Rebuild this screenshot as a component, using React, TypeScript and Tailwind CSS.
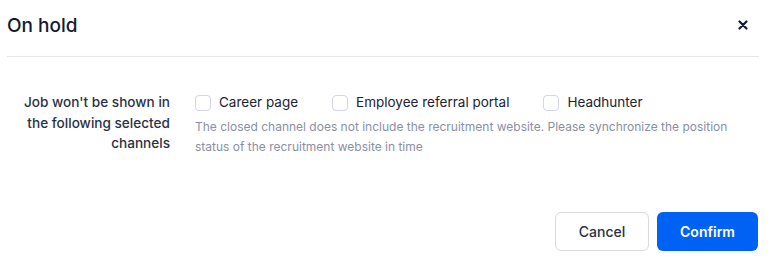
import React from "react";

function Box({ label }: { label: string }) {
  return (
    <label className="flex items-center gap-[8px] cursor-pointer">
      <span className="w-[16px] h-[16px] rounded-[4px] border border-[#d3d5e0] bg-white" />
      <span className="text-[13.5px] leading-[21px] text-[#1d2234]">{label}</span>
    </label>
  );
}

export default function App() {
  return (
    <div
      className="w-[775px] h-[262px] bg-white relative overflow-hidden"
      style={{ fontFamily: "Inter, 'Noto Sans', sans-serif" }}
    >
      <div className="ml-[7px] mr-[16px] h-[57px] border-b border-[#e6e6ee] flex items-center justify-between">
        <h1 className="text-[19px] font-medium text-[#151a2e] leading-none -mt-[5px]">On hold</h1>
        <button className="w-[20px] h-[20px] flex items-center justify-center -mt-[7px] mr-[6px]">
          <svg width="10" height="10" viewBox="0 0 10 10">
            <path d="M1.5 1.5 L8.5 8.5 M8.5 1.5 L1.5 8.5" stroke="#151a2e" strokeWidth="2.2" strokeLinecap="round" />
          </svg>
        </button>
      </div>
      <div className="flex ml-[7px] mt-[35px]">
        <div className="w-[163px] text-right text-[13.6px] leading-[20.5px] font-medium text-[#2b3145]">
          Job won't be shown in the following selected channels
        </div>
        <div className="ml-[25px] flex flex-col">
          <div className="flex items-center gap-[34px]">
            <Box label="Career page" />
            <Box label="Employee referral portal" />
            <Box label="Headhunter" />
          </div>
          <p className="mt-[4px] w-[540px] text-[12px] leading-[19.5px] text-[#8a8fa6]">
            The closed channel does not include the recruitment website. Please synchronize the position status of the recruitment website in time
          </p>
        </div>
      </div>
      <div className="absolute right-[17px] top-[212px] flex gap-[8px]">
        <button className="w-[94px] h-[39px] rounded-[6px] border border-[#d8d9e2] bg-white text-[14px] font-medium text-[#2b3145]">
          Cancel
        </button>
        <button className="w-[101px] h-[39px] rounded-[6px] bg-[#0062f5] text-[14px] font-semibold text-white">
          Confirm
        </button>
      </div>
    </div>
  );
}
